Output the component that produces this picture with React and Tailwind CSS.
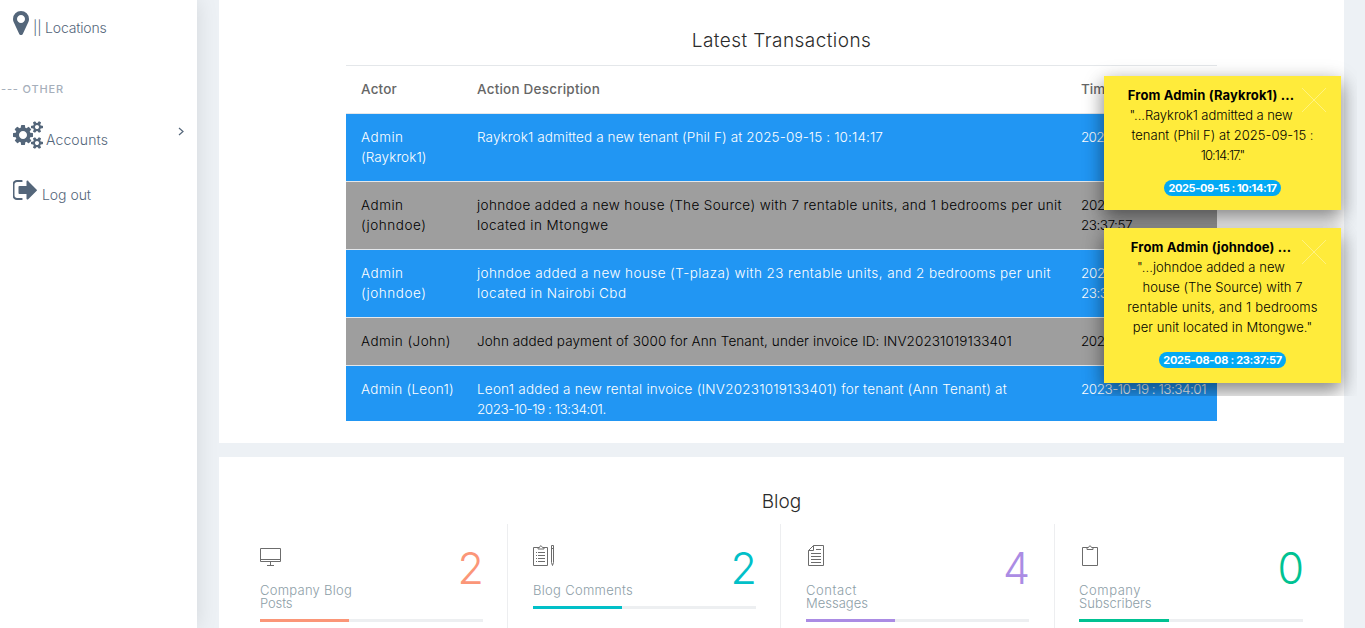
const GEARS =
  'M832 896q0-106-75-181t-181-75-181 75-75 181 75 181 181 75 181-75 75-181zm768 512q0-52-38-90t-90-38-90 38-38 90q0 53 37.5 90.5t90.5 37.5 90.5-37.5 37.5-90.5zm0-1024q0-52-38-90t-90-38-90 38-38 90q0 53 37.5 90.5t90.5 37.5 90.5-37.5 37.5-90.5zm-384 421v185q0 10-7 19.5t-16 10.5l-155 24q-11 35-32 76 34 48 90 115 7 11 7 20 0 12-7 19-23 30-82.5 89.5t-78.5 59.5q-11 0-21-7l-115-90q-37 19-77 31-11 108-23 155-7 24-30 24h-186q-11 0-20-7.5t-10-17.5l-23-153q-34-10-75-31l-118 89q-7 7-20 7-11 0-21-8-144-133-144-160 0-9 7-19 10-14 41-53t47-61q-23-44-35-82l-152-24q-10-1-17-9.5t-7-19.5v-185q0-10 7-19.5t16-10.5l155-24q11-35 32-76-34-48-90-115-7-11-7-20 0-12 7-20 22-30 82-89t79-59q11 0 21 7l115 90q34-18 77-32 11-108 23-154 7-24 30-24h186q11 0 20 7.5t10 17.5l23 153q34 10 75 31l118-89q8-7 20-7 11 0 21 8 144 133 144 160 0 8-7 19-12 16-42 54t-45 60q23 48 34 82l152 23q10 2 17 10.5t7 19.5zm640 533v140q0 16-149 31-12 27-30 52 51 113 51 138 0 4-4 7-122 71-124 71-8 0-46-47t-52-68q-20 2-30 2t-30-2q-14 21-52 68t-46 47q-2 0-124-71-4-3-4-7 0-25 51-138-18-25-30-52-149-15-149-31v-140q0-16 149-31 13-29 30-52-51-113-51-138 0-4 4-7 4-2 35-20t59-34 30-16q8 0 46 46.5t52 67.5q20-2 30-2t30 2q51-71 92-112l6-2q4 0 124 70 4 3 4 7 0 25-51 138 17 23 30 52 149 15 149 31zm0-1024v140q0 16-149 31-12 27-30 52 51 113 51 138 0 4-4 7-122 71-124 71-8 0-46-47t-52-68q-20 2-30 2t-30-2q-14 21-52 68t-46 47q-2 0-124-71-4-3-4-7 0-25 51-138-18-25-30-52-149-15-149-31v-140q0-16 149-31 13-29 30-52-51-113-51-138 0-4 4-7 4-2 35-20t59-34 30-16q8 0 46 46.5t52 67.5q20-2 30-2t30 2q51-71 92-112l6-2q4 0 124 70 4 3 4 7 0 25-51 138 17 23 30 52 149 15 149 31z';
const MARKER =
  'M1152 640q0-106-75-181t-181-75-181 75-75 181 75 181 181 75 181-75 75-181zm256 0q0 109-33 179l-364 774q-16 33-47.5 52t-67.5 19-67.5-19-46.5-52l-365-774q-33-70-33-179 0-212 150-362t362-150 362 150 150 362z';
const SIGN_OUT =
  'M704 1440q0 4 1 20t.5 26.5-3 23.5-10 19.5-20.5 6.5h-320q-119 0-203.5-84.5t-84.5-203.5v-704q0-119 84.5-203.5t203.5-84.5h320q13 0 22.5 9.5t9.5 22.5q0 4 1 20t.5 26.5-3 23.5-10 19.5-20.5 6.5h-320q-66 0-113 47t-47 113v704q0 66 47 113t113 47h312l11.5 1 11.5 3 8 5.5 7 9 2 13.5zm928-544q0 26-19 45l-544 544q-19 19-45 19t-45-19-19-45v-288h-448q-26 0-45-19t-19-45v-384q0-26 19-45t45-19h448v-288q0-26 19-45t45-19 45 19 19 45l544 544q19 19 19 45z';

function T({ c = '', children }) {
  return <span className={`whitespace-pre ${c}`}>{children}</span>;
}

const admin = ['Admin', 'tracking-[0.49px]'];
const johndoe = ['(johndoe)', 'tracking-[0.54px]'];

const rows = [
  {
    blue: true,
    actor: [admin, ['(Raykrok1)', 'tracking-[0.07px]']],
    text: [['Raykrok1 admitted a new tenant (Phil F) at 2025-09-15 : 10:14:17', 'tracking-[0.115px]']],
    time: [['2025-09-15 : 10:14:17', 'tracking-[-0.7px]']],
  },
  {
    blue: false,
    actor: [admin, johndoe],
    text: [
      ['johndoe added a new house (The Source) with 7 rentable units, and 1 bedrooms per unit', 'tracking-[0.378px]'],
      ['located in Mtongwe', 'tracking-[0.43px]'],
    ],
    time: [['2025-08-08 :', 'tracking-[-0.3px]'], ['23:37:57', 'tracking-[-0.49px]']],
  },
  {
    blue: true,
    actor: [admin, johndoe],
    text: [
      ['johndoe added a new house (T-plaza) with 23 rentable units, and 2 bedrooms per unit', 'tracking-[0.417px]'],
      ['located in Nairobi Cbd', 'tracking-[0.46px]'],
    ],
    time: [['2025-08-08 :', 'tracking-[-0.3px]'], ['23:33:57', 'tracking-[-0.49px]']],
  },
  {
    blue: false,
    actor: [['Admin (John)', 'tracking-[0.435px]']],
    text: [['John added payment of 3000 for Ann Tenant, under invoice ID: INV20231019133401', 'tracking-[0.099px]']],
    time: [['2023-10-19 : 13:35:01', 'tracking-[-0.49px]']],
  },
  {
    blue: true,
    actor: [['Admin (Leon1)', 'tracking-[0.276px]']],
    text: [
      ['Leon1 added a new rental invoice (INV20231019133401) for tenant (Ann Tenant) at', 'tracking-[0.225px]'],
      ['2023-10-19 : 13:34:01.', 'tracking-[-0.465px]'],
    ],
    time: [['2023-10-19 : 13:34:01', 'tracking-[-0.488px]']],
  },
];

function Cell({ lines }) {
  return (
    <div className="flex flex-col items-start pl-[15px]">
      {lines.map(([text, c], i) => <T key={i} c={c}>{text}</T>)}
    </div>
  );
}

function Note({ title, lines, stamp, h }) {
  return (
    <div className={`relative flex w-[237px] shrink-0 flex-col items-center bg-[#ffeb3b] pt-[9px] text-[13px] leading-5 font-light text-black shadow-[0_8px_17px_rgba(0,0,0,0.3),0_6px_20px_rgba(0,0,0,0.25)] ${h}`}>
      <span className={`mr-[23px] font-bold whitespace-pre ${title[1]}`}>{title[0]}</span>
      {lines.map(([text, c], i) => (
        <span key={i} className={`whitespace-pre ${i ? '' : 'mr-[23px]'} ${c}`}>{text}</span>
      ))}
      <span className={`mt-[15px] flex h-4 items-center rounded-full bg-[#03a9f4] px-[4.5px] text-[11px] font-bold whitespace-pre text-white ${stamp[1]}`}>{stamp[0]}</span>
      <svg className="absolute top-3 right-[15px] h-6 w-6" viewBox="0 0 24 24" stroke="#fff" strokeOpacity="0.35" fill="none">
        <path d="M0 0L24 24M24 0L0 24" />
      </svg>
    </div>
  );
}

const icons = {
  screen: 'M.5 3.5h20v13H.5zM.5 14.500h20M10.500 16.500v4M7 20.500h7',
  pen: 'M5 2.500H.5v18h14v-18H11M5 3.500v-1h1.500q1-3.500 3 0H11v1.500H5zM3 7.500h1M5 7.500h7M3 10.500h1M5 10.500h7M3 13.500h1M5 13.500h7M3 16.500h1M5 16.500h7M18.500.5h2v17l-1 3-1-3zM18.500 3.500h2',
  doc: 'M7.500.5h10v20h-15v-15zM7.500.5v5h-5M5 8.500h10M5 11.500h10M5 14.500h10M5 17.500h10M10 4.500h5',
  clip: 'M8 2.500H3.500v18h15v-18H14M8 4.500v-2h1.500q1.500-3.500 3 0H14v2z',
};

const stats = [
  { icon: 'screen', lines: [['Company Blog', 'tracking-[0.254px]'], ['Posts', 'tracking-[-0.1px]']], n: '2', pad: 'pl-[26px] pr-6', text: 'text-[#fb9678]', bar: 'bg-[#fb9678]' },
  { icon: 'pen', lines: [['Blog Comments', 'tracking-[0.293px]']], n: '2', pad: 'pl-[25px] pr-6', text: 'text-[#01c0c8]', bar: 'bg-[#01c0c8]' },
  { icon: 'doc', lines: [['Contact', 'tracking-[0.56px]'], ['Messages', 'tracking-[0.014px]']], n: '4', pad: 'pl-[25px] pr-[25px]', text: 'text-[#ab8ce4]', bar: 'bg-[#ab8ce4]' },
  { icon: 'clip', lines: [['Company', 'tracking-[0.55px]'], ['Subscribers', 'tracking-[0.021px]']], n: '0', pad: 'pl-[24px] pr-[26px]', text: 'text-[#00c292]', bar: 'bg-[#00c292]' },
];

export default function App() {
  return (
    <div className="relative flex h-[628px] overflow-hidden bg-[#edf1f5] font-['Inter',sans-serif]">
      <aside className="z-10 flex w-[197px] shrink-0 flex-col bg-white text-[14px] font-light text-[#54667a] shadow-[1px_0_20px_rgba(0,0,0,0.1)]">
        <div className="flex items-start gap-1 pt-[9px] pl-[13px]">
          <svg className="h-7 w-4" viewBox="384 0 1024 1792" fill="currentColor"><path d={MARKER} /></svg>
          <span className="pt-[9px] leading-5 tracking-[-0.188px]">|| Locations</span>
        </div>
        <div className="mt-[41px] pl-px text-[11px] leading-5 font-medium tracking-[0.84px] text-[#a6afbb]">--- OTHER</div>
        <div className="mt-[22px] flex items-start pl-[13px]">
          <svg className="h-7 w-[30px]" viewBox="-64 0 1920 1792" fill="currentColor"><path d={GEARS} /></svg>
          <span className="pt-[9px] pl-[3px] leading-5 tracking-[0.117px]">Accounts</span>
          <svg className="mt-[6px] mr-[13px] ml-auto h-[9px] w-[6px]" viewBox="0 0 6 9" fill="none" stroke="currentColor" strokeWidth="1.2"><path d="M1 1l4 3.500L1 8" /></svg>
        </div>
        <div className="mt-[26px] flex items-start gap-[5px] pl-[13px]">
          <svg className="h-7 w-6" viewBox="96 0 1536 1792" fill="currentColor"><path d={SIGN_OUT} /></svg>
          <span className="pt-[9px] leading-5 tracking-[-0.042px]">Log out</span>
        </div>
      </aside>

      <main className="flex w-[1147px] shrink-0 flex-col gap-[14px] pl-[22px]">
        <section className="h-[443px] shrink-0 bg-white pt-[26px]">
          <h2 className="text-center text-[19px] leading-[30px] font-light tracking-[0.438px] text-[#2b2b2b]">Latest Transactions</h2>
          <div className="mt-[9px] ml-[127px] h-[356px] w-[871px] overflow-hidden text-[13.5px] leading-5">
            <div className="grid h-12 grid-cols-[116px_604px_151px] border-t border-[#e4e7ea] pt-[13px] font-medium text-[#666]">
              <Cell lines={[['Actor', 'tracking-[0.178px]']]} />
              <Cell lines={[['Action Description', 'tracking-[0.207px]']]} />
              <Cell lines={[['Time', '']]} />
            </div>
            {rows.map((r, i) => (
              <div key={i} className={`grid grid-cols-[116px_604px_151px] border-t border-[#e4e7ea] pt-[13px] pb-[14px] font-light ${r.blue ? 'bg-[#2196f3] text-white' : 'bg-[#9e9e9e] text-black'}`}>
                <Cell lines={r.actor} />
                <Cell lines={r.text} />
                <Cell lines={r.time} />
              </div>
            ))}
          </div>
        </section>

        <section className="h-[171px] shrink-0 overflow-hidden bg-white pt-[30px]">
          <h2 className="text-center text-[19px] leading-[30px] font-light text-[#2b2b2b]">Blog</h2>
          <div className="mx-[15px] mt-[7px] grid h-[140px] grid-cols-[274px_273px_274px_274px]">
            {stats.map((s, i) => (
              <div key={i} className={`pt-[21px] ${s.pad} ${i < 3 ? 'border-r border-[#edeef0]' : ''}`}>
                <div className="flex justify-between">
                  <div>
                    <svg className="h-[22px] w-[22px]" viewBox="0 0 22 22" fill="none" stroke="#6c6c6c" strokeWidth="1"><path d={icons[s.icon]} /></svg>
                    <div className="mt-[17px] flex flex-col items-start text-[13px] leading-[13px] font-light text-[#8d9ea7]">
                      {s.lines.map(([text, c]) => <T key={text} c={c}>{text}</T>)}
                    </div>
                  </div>
                  <span className={`-mt-px -mr-px h-[48px] text-[43px] leading-[48px] font-light ${s.text}`}>{s.n}</span>
                </div>
                <div className="mt-[9px] h-[3px] bg-[#edeff1]"><div className={`h-full w-2/5 ${s.bar}`} /></div>
              </div>
            ))}
          </div>
        </section>
      </main>

      <div className="absolute top-[56px] left-[1074px] z-20 flex h-[340px] w-[283px] flex-col gap-[18px] overflow-hidden pt-5 pl-[30px]">
        <Note
          h="h-[134px]"
          title={['From Admin (Raykrok1) ...', 'tracking-[0.134px]']}
          lines={[
            ['"...Raykrok1 admitted a new', 'tracking-[-0.065px]'],
            ['tenant (Phil F) at 2025-09-15 :', 'tracking-[0.022px]'],
            ['10:14:17."', 'tracking-[-0.938px]'],
          ]}
          stamp={['2025-09-15 : 10:14:17', 'tracking-[-0.412px]']}
        />
        <Note
          h="h-[155px]"
          title={['From Admin (johndoe) ...', 'tracking-[0.148px]']}
          lines={[
            ['"...johndoe added a new', 'tracking-[0.061px]'],
            ['house (The Source) with 7', 'tracking-[0.019px]'],
            ['rentable units, and 1 bedrooms', 'tracking-[0.181px]'],
            ['per unit located in Mtongwe."', 'tracking-[0.083px]'],
          ]}
          stamp={['2025-08-08 : 23:37:57', 'tracking-[-0.289px]']}
        />
      </div>
    </div>
  );
}
